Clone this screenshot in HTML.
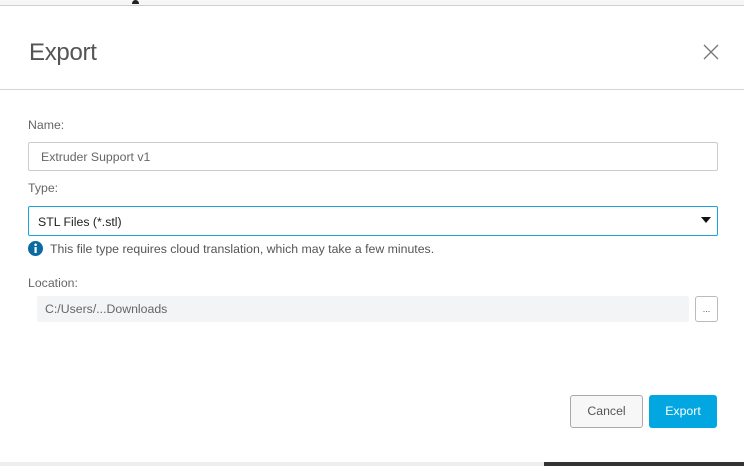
<!DOCTYPE html>
<html><head><style>
*{box-sizing:border-box;margin:0;padding:0}
body{width:744px;height:466px;overflow:hidden;background:#f4f4f4;font-family:"Liberation Sans",Arial,sans-serif;position:relative}
.top{position:absolute;left:0;top:0;width:744px;height:6px;background:#f6f6f6;border-bottom:1px solid #cfcfcf}
.bot{position:absolute;left:0;top:462px;width:744px;height:4px;background:#eee}
.bot2{position:absolute;left:544px;top:462px;width:200px;height:4px;background:#333}
.dlg{position:absolute;left:0;top:6px;width:744px;height:456px;background:#fff}
.a{position:absolute}
.lbl{font-size:12.3px;color:#666}
</style></head><body>
<div class="top"></div><div class="a" style="left:132px;top:0;width:7px;height:4px;border-radius:4px 4px 0 0;background:#222"></div>
<div class="bot"></div><div class="bot2"></div>
<div class="dlg">
<div class="a" style="left:29px;top:33px;font-size:24px;color:#555;letter-spacing:-0.3px">Export</div>
<svg class="a" style="left:703px;top:38px" width="16" height="16"><path d="M1 1L15 15M15 1L1 15" stroke="#777" stroke-width="1.3"/></svg>
<div class="a" style="left:0;top:83px;width:744px;height:1px;background:#d4d4d4"></div>
<div class="a lbl" style="left:28px;top:112px">Name:</div>
<div class="a" style="left:28px;top:136px;width:690px;height:29px;border:1px solid #ccc;border-radius:2px;font-size:12.3px;color:#666;padding:7px 12px">Extruder Support v1</div>
<div class="a lbl" style="left:28px;top:175px">Type:</div>
<div class="a" style="left:28px;top:200px;width:690px;height:30px;border:1px solid #1aa3d9;border-radius:2px;font-size:12.3px;color:#222;padding:8px 9px">STL Files (*.stl)</div>
<svg class="a" style="left:701px;top:211px" width="10" height="7"><path d="M0 0H10L5 6Z" fill="#111"/></svg>
<svg class="a" style="left:28px;top:235px" width="15" height="15"><circle cx="7.5" cy="7.5" r="7.5" fill="#0a6aa1"/><rect x="6.5" y="6" width="2.2" height="6" fill="#fff"/><circle cx="7.6" cy="3.8" r="1.3" fill="#fff"/></svg>
<div class="a lbl" style="left:50px;top:236px;color:#555">This file type requires cloud translation, which may take a few minutes.</div>
<div class="a lbl" style="left:28px;top:270px">Location:</div>
<div class="a" style="left:37px;top:290px;width:652px;height:26px;background:#f3f4f5;border-radius:2px;font-size:12.3px;color:#666;padding:6px 8px">C:/Users/...Downloads</div>
<div class="a" style="left:695px;top:290px;width:23px;height:26px;border:1px solid #bbb;border-radius:3px;font-size:9px;color:#555;text-align:center;line-height:24px">...</div>
<div class="a" style="left:570px;top:389px;width:73px;height:33px;border:1px solid #aaa;border-radius:3px;background:#f7f7f7;font-size:12.3px;color:#555;text-align:center;line-height:31px">Cancel</div>
<div class="a" style="left:649px;top:389px;width:68px;height:33px;border-radius:3px;background:#02a6e1;font-size:12.3px;color:#fff;text-align:center;line-height:33px">Export</div>
</div>
</body></html>
